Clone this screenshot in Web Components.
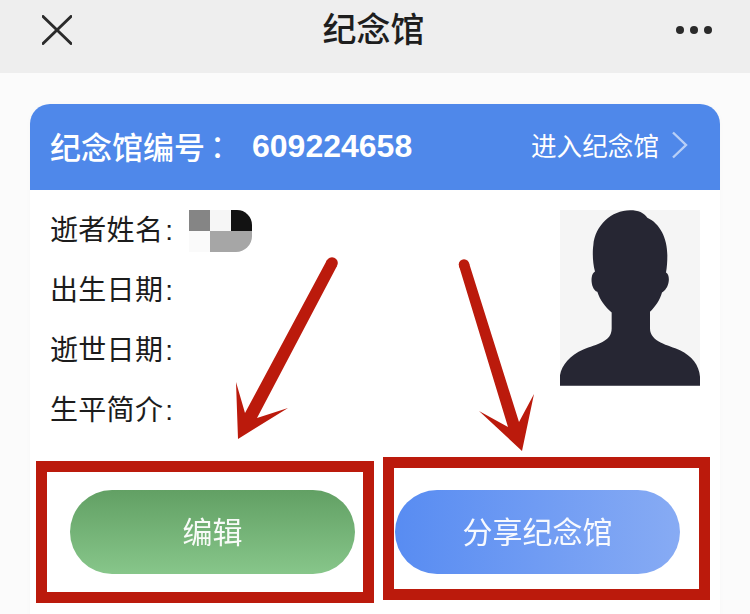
<!DOCTYPE html>
<html lang="zh-CN"><head><meta charset="utf-8">
<style>
html,body{margin:0;padding:0;height:614px;overflow:hidden;background:#fbfbfb}
body{font-family:"Liberation Sans","Noto Sans CJK SC",sans-serif;color:#1c1c1c}
</style></head><body>
<memorial-app>
  <nav-bar slot="nav" title="纪念馆"></nav-bar>
  <memorial-card slot="card" number="609224658">
    <info-row label="逝者姓名"><mosaic-blur></mosaic-blur></info-row>
    <info-row label="出生日期"></info-row>
    <info-row label="逝世日期"></info-row>
    <info-row label="生平简介"></info-row>
    <portrait-photo slot="photo"></portrait-photo>
    <pill-button slot="actions" tone="green">编辑</pill-button>
    <pill-button slot="actions" tone="blue">分享纪念馆</pill-button>
  </memorial-card>
  <arrow-notes slot="notes"></arrow-notes>
</memorial-app>
<script>
const make=(name,html)=>customElements.define(name,class extends HTMLElement{
  connectedCallback(){
    if(this.shadowRoot)return;
    const r=this.attachShadow({mode:'open'});
    r.innerHTML=typeof html==='function'?html(this):html;
  }
});
make('memorial-app',`<style>
:host{display:block;position:relative;width:750px;height:614px;overflow:hidden}
.card{display:block;padding:31px 30px 0}
</style><slot name="nav"></slot><div class="card"><slot name="card"></slot></div><slot name="notes"></slot>`);
make('nav-bar',h=>`<style>
:host{display:grid;grid-template-columns:1fr auto 1fr;align-items:center;height:60px;padding:0 38px 13px 42px;background:#eeeeee}
.t{font-size:34px;line-height:60px;color:#1e1e1e;font-weight:500;padding-right:7px}
.r{justify-self:end;display:flex}
svg{display:block}
</style>
<svg width="30" height="30" viewBox="0 0 30 30"><path d="M1 1.5 29 28.5M29 1.5 1 28.5" fill="none" stroke="#2a2a2a" stroke-width="3" stroke-linecap="round"/></svg>
<div class="t">${h.getAttribute('title')}</div>
<div class="r"><svg width="36" height="10" viewBox="0 0 36 10" fill="#2a2a2a"><circle cx="4" cy="5" r="4"/><circle cx="18" cy="5" r="4"/><circle cx="32" cy="5" r="4"/></svg></div>`);
make('memorial-card',h=>`<style>
:host{display:block;background:#fff;border-radius:20px 20px 0 0;height:520px;box-shadow:0 0 6px rgba(0,0,0,.02)}
header{display:flex;align-items:center;height:86px;padding:0 32px 0 20px;background:#4f88ea;color:#fff;border-radius:20px 20px 0 0}
.l{font-size:31px;font-weight:500;margin-top:-4px}
.c{font-family:"Noto Sans CJK TC",sans-serif;font-size:31px;margin:-4px 19px 0 -3px}
.n{font-size:32px;font-weight:700;flex:1;padding-bottom:1px}
.e{font-size:25.6px;margin-top:-6px}
svg{display:block;margin-left:12px;margin-top:-4px}
.body{display:flex;justify-content:space-between;padding:0 20px 0 20px}
.rows{padding-top:8px}
.photo{padding-top:20px}
.act{display:flex;gap:40px;padding:52px 40px 0 40px}
</style>
<header><span class="l">纪念馆编号</span><span class="c">：</span><span class="n">${h.getAttribute('number')}</span><span class="e">进入纪念馆</span>
<svg width="17" height="28" viewBox="0 0 17 28"><path d="M2 1.5 15 14 2 26.500" fill="none" stroke="rgba(255,255,255,.6)" stroke-width="2.4"/></svg></header>
<div class="body"><div class="rows"><slot></slot></div><div class="photo"><slot name="photo"></slot></div></div>
<div class="act"><slot name="actions"></slot></div>`);
make('info-row',h=>`<style>
:host{display:flex;align-items:center;height:60px;font-size:28px;color:#1c1c1c}
.k{letter-spacing:.3px}
.d{margin-left:2px}
.s{margin-left:16px;display:flex;margin-top:6px}
</style><span class="k">${h.getAttribute('label')}<span class="d">:</span></span><span class="s"><slot></slot></span>`);
make('mosaic-blur',`<style>
:host{display:grid;grid-template-columns:repeat(3,21px);grid-template-rows:21px 21px;border-radius:0 15px 16px 0;overflow:hidden;filter:blur(.6px)}
i:nth-of-type(1){background:#858585}
i:nth-of-type(2){background:#f6f6f6}
i:nth-of-type(3){background:#121212}
i:nth-of-type(4){background:#fafafa}
i:nth-of-type(5){background:#a6a6a6;grid-column:span 2}
</style><i></i><i></i><i></i><i></i><i></i>`);
make('portrait-photo',`<style>
:host{display:block;width:140px;height:176px;background:#f5f5f5}
svg{display:block}
</style><svg width="140" height="176" viewBox="60 45 420 527"><path fill="#262633" d="M60 572V540C65 510 90 480 130 463C170 447 215 440 215 400V352C195 335 180 315 172 290C158 285 153 262 155 248C156 238 160 232 165 229C158 205 157 170 160 150C165 90 215 45 270 45C295 45 312 52 322 68C360 85 382 130 382 180C382 200 381 215 378 232C385 235 388 248 386 260C384 275 375 287 366 292C360 315 345 335 330 350V400C330 440 385 450 420 465C455 482 478 510 480 545V572Z"/></svg>`);
make('pill-button',h=>`<style>
:host{display:flex;align-items:center;justify-content:center;width:285px;height:84px;border-radius:42px;color:#fff;font-size:30px;
background:${h.getAttribute('tone')==='green'?'linear-gradient(180deg,#62a064,#87c68a)':'linear-gradient(90deg,#588cf2,#87abf4)'}}
span{margin-top:-5px;opacity:.95}
</style><span><slot></slot></span>`);
make('arrow-notes',`<style>
:host{display:block;position:absolute;inset:0;pointer-events:none}
svg{display:block}
</style><svg width="750" height="614" viewBox="0 0 750 614">
<g fill="#bb1a0c">
<path d="M327 260 337 266 257 418 288 408 238 439 236 382 245 413Z"/>
<circle cx="332" cy="263" r="5.800"/>
<path d="M459 266 469 263 519 422 534 394 522 451 479 411 508 427Z"/>
<circle cx="464" cy="264.500" r="5.300"/>
</g>
<g fill="none" stroke="#bb1a0c" stroke-width="11">
<rect x="41.500" y="466.500" width="327" height="131"/>
<rect x="388.500" y="462.500" width="316" height="132"/>
</g></svg>`);
</script>
</body></html>
